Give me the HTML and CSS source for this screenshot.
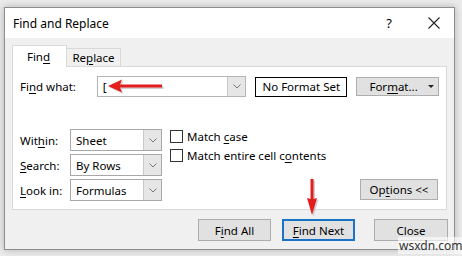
FILE: index.html
```html
<!DOCTYPE html>
<html lang="en">
<head>
  <meta charset="UTF-8" />
  <title>Find and Replace</title>
  <meta name="viewport" content="width=device-width, initial-scale=1.0" />
  <link rel="stylesheet" href="styles.css">
</head>
<body>
  <div class="window">
    <div class="titlebar">
      <span class="title">Find and Replace</span>
      <span class="help">?</span>
      <span class="close-x">
        <svg width="12" height="12" viewBox="0 0 12 12"><path d="M0.5 0.5 L11.5 11.5 M11.5 0.5 L0.5 11.5" stroke="#222" stroke-width="1.1" fill="none"/></svg>
      </span>
    </div>

    <div class="client">
      <div class="tabs">
        <div class="tab active"><span>Fin<u>d</u></span></div>
        <div class="tab"><span>Re<u>p</u>lace</span></div>
      </div>

      <div class="panel">
        <div class="find-row">
          <label class="find-label">Fi<u>n</u>d what:</label>
          <div class="combo find-combo">
            <span class="combo-text">[</span>
            <span class="combo-btn"><svg width="8" height="5" viewBox="0 0 8 5"><path d="M0.5 0.5 L4 4 L7.5 0.5" stroke="#777" fill="none"/></svg></span>
          </div>
          <div class="format-box">No Format Set</div>
          <button class="btn format-btn"><span>For<u>m</u>at...</span><span class="caret"></span></button>
        </div>

        <div class="options-area">
          <div class="scope-grid">
            <label>Wit<u>h</u>in:</label>
            <div class="combo">
              <span class="combo-text">Sheet</span>
              <span class="combo-btn"><svg width="8" height="5" viewBox="0 0 8 5"><path d="M0.5 0.5 L4 4 L7.5 0.5" stroke="#777" fill="none"/></svg></span>
            </div>
            <label><u>S</u>earch:</label>
            <div class="combo">
              <span class="combo-text">By Rows</span>
              <span class="combo-btn"><svg width="8" height="5" viewBox="0 0 8 5"><path d="M0.5 0.5 L4 4 L7.5 0.5" stroke="#777" fill="none"/></svg></span>
            </div>
            <label><u>L</u>ook in:</label>
            <div class="combo">
              <span class="combo-text">Formulas</span>
              <span class="combo-btn"><svg width="8" height="5" viewBox="0 0 8 5"><path d="M0.5 0.5 L4 4 L7.5 0.5" stroke="#777" fill="none"/></svg></span>
            </div>
          </div>

          <div class="checks">
            <div class="check"><span class="box"></span><span>Match <u>c</u>ase</span></div>
            <div class="check"><span class="box"></span><span>Match entire cell c<u>o</u>ntents</span></div>
          </div>

          <button class="btn options-btn"><span>Op<u>t</u>ions &lt;&lt;</span></button>
        </div>
      </div>

      <div class="actions">
        <button class="btn action"><span>F<u>i</u>nd All</span></button>
        <button class="btn action default"><span><u>F</u>ind Next</span></button>
        <button class="btn action close">Close</button>
      </div>
    </div>
  </div>

  <svg class="arrow arrow-left" width="60" height="18" viewBox="0 0 60 18">
    <g transform="translate(1.5 1.5)" fill="#b0b0b0" opacity="0.6">
      <polygon points="0,7 14,0.5 12,5.5 54,5.5 54,8.5 12,8.5 14,13.5"/>
    </g>
    <polygon points="0,7 14,0.5 12,5.5 54,5.5 54,8.5 12,8.5 14,13.5" fill="#e41e1e"/>
  </svg>

  <svg class="arrow arrow-down" width="16" height="40" viewBox="0 0 16 40">
    <g transform="translate(1.5 1.5)" fill="#b0b0b0" opacity="0.6">
      <polygon points="6.5,0 9.5,0 9.5,20 13,19 8,36 3,19 6.5,20"/>
    </g>
    <polygon points="6.5,0 9.5,0 9.5,20 13,19 8,36 3,19 6.5,20" fill="#e41e1e"/>
  </svg>

  <div class="watermark">wsxdn.com</div>
</body>
</html>
```

FILE: styles.css
```css
* {
  box-sizing: border-box;
}

body {
  margin: 0;
  padding: 7px 0 0 4px;
  width: 462px;
  height: 256px;
  overflow: hidden;
  position: relative;
  background-color: #ebebeb;
  font-family: "Segoe UI", "Noto Sans", sans-serif;
  font-size: 11.5px;
  color: #000;
}

u {
  text-decoration: underline;
  text-underline-offset: 2px;
}

.window {
  width: 451px;
  height: 243px;
  border: 1px solid #8e8e8e;
  background-color: #f0f0f0;
  box-shadow: 0 0 7px rgba(0, 0, 0, 0.25);
  display: flex;
  flex-direction: column;
}

.titlebar {
  height: 30px;
  background: #fff;
  display: flex;
  align-items: center;
  padding-left: 8px;
}

.title {
  font-size: 12px;
  flex: 1;
}

.help {
  font-size: 13px;
  margin-right: 22px;
}

.close-x {
  width: 40px;
  display: flex;
  justify-content: center;
  align-items: center;
}

.close-x svg {
  display: block;
}

.client {
  flex: 1;
  padding: 7px 6px 8px 7px;
  display: flex;
  flex-direction: column;
}

.tabs {
  display: flex;
  align-items: flex-end;
  height: 21px;
}

.tab {
  width: 55px;
  height: 18px;
  border: 1px solid #d9d9d9;
  border-bottom: none;
  background: #f0f0f0;
  display: flex;
  align-items: center;
  justify-content: center;
  margin-left: -1px;
}

.tab.active {
  height: 22px;
  background: #fff;
  margin-left: 0;
  margin-bottom: -1px;
  position: relative;
  z-index: 1;
  padding-right: 2px;
}

.panel {
  width: 435px;
  height: 144px;
  border: 1px solid #d9d9d9;
  background: #fff;
  padding: 9px 7px 8px 7px;
}

.find-row {
  display: flex;
  align-items: center;
  height: 21px;
}

.find-label {
  width: 77px;
}

.combo {
  display: flex;
  height: 22px;
  width: 92px;
  border: 1px solid #a8a8a8;
  background: #fff;
}

.combo-text {
  flex: 1;
  padding-left: 5px;
  display: flex;
  align-items: center;
}

.combo-btn {
  width: 18px;
  background: #e6e6e6;
  border-left: 1px solid #c8c8c8;
  display: flex;
  align-items: center;
  justify-content: center;
}

.find-combo {
  width: 150px;
  height: 21px;
  border-color: #b4b4b4;
}

.format-box {
  margin-left: 9px;
  width: 92px;
  height: 20px;
  border: 1px solid #000;
  display: flex;
  align-items: center;
  justify-content: center;
}

.btn {
  font-family: inherit;
  font-size: inherit;
  color: #000;
  background: #e1e1e1;
  border: 1px solid #adadad;
  padding: 0;
  display: flex;
  align-items: center;
  justify-content: center;
}

.format-btn {
  margin-left: 9px;
  width: 83px;
  height: 19px;
  padding-left: 8px;
}

.caret {
  margin-left: 10px;
  width: 0;
  height: 0;
  border-left: 3px solid transparent;
  border-right: 3px solid transparent;
  border-top: 3px solid #222;
}

.options-area {
  margin-top: 32px;
  display: flex;
  align-items: flex-end;
}

.scope-grid {
  display: grid;
  grid-template-columns: 50px 92px;
  row-gap: 3px;
  align-items: center;
}

.checks {
  align-self: flex-start;
  margin-left: 8px;
  padding-top: 1px;
  display: flex;
  flex-direction: column;
  gap: 6px;
}

.check {
  display: flex;
  align-items: center;
  height: 13px;
}

.box {
  width: 13px;
  height: 13px;
  border: 1px solid #333;
  background: #fff;
  margin-right: 4px;
}

.options-btn {
  margin-left: auto;
  margin-right: 1px;
  margin-bottom: 1px;
  width: 78px;
  height: 21px;
}

.actions {
  margin-top: 9px;
  display: flex;
  justify-content: flex-end;
  gap: 11px;
}

.action {
  width: 73px;
  height: 22px;
}

.action.default {
  border: 2px solid #1a73c4;
}

.action.close {
  margin-left: 8px;
  width: 74px;
}

.arrow {
  position: absolute;
}

.arrow-left {
  left: 108px;
  top: 79px;
}

.arrow-down {
  left: 304px;
  top: 179px;
}

.watermark {
  position: absolute;
  left: 398px;
  top: 237px;
  font-family: "Segoe UI", "Noto Sans", sans-serif;
  font-size: 12px;
  color: #333;
  background: rgba(255, 255, 255, 0.6);
  padding: 0 1px;
}
```
